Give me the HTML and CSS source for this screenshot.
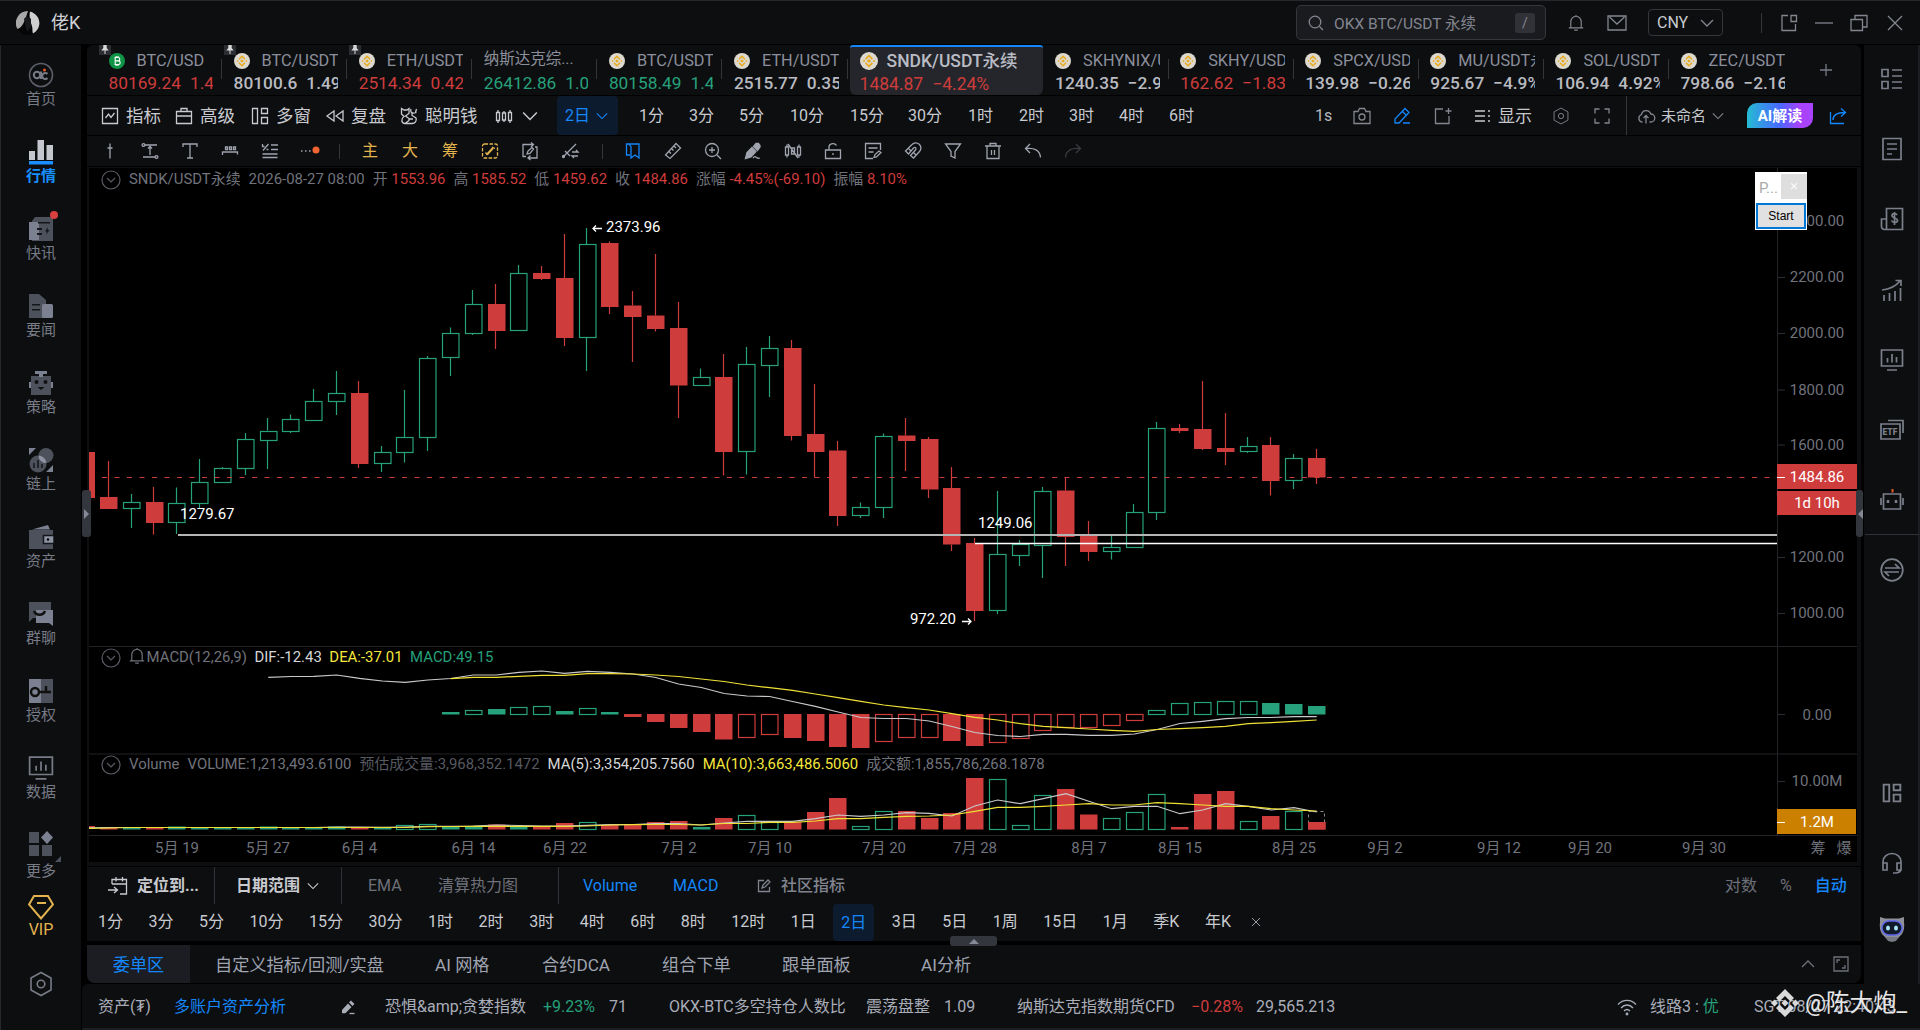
FILE: index.html
```html
<!DOCTYPE html>
<html lang="zh-CN">
<head>
    <meta charset="UTF-8">
    <meta name="viewport" content="width=device-width, initial-scale=1.0">
    <title>SNDK/USDT永续</title>
    <link rel="stylesheet" href="styles.css">
</head>
<body>
    <svg class="sprite">
        <symbol id="bnb" viewBox="0 0 16 16"><circle cx="8" cy="8" r="8" fill="#ddd9cf"/><g fill="none" stroke="#e8a91c" stroke-width="1.5"><path d="M5 6.3 8 3.3l3 3M5 9.7l3 3 3-3"/></g><path d="M8 6.2 9.8 8 8 9.8 6.2 8zM3.6 6.9 4.7 8 3.6 9.1 2.5 8zM12.4 6.9 13.5 8l-1.1 1.1L11.3 8z" fill="#e8a91c"/></symbol>
        <symbol id="btc" viewBox="0 0 16 16"><circle cx="8" cy="8" r="8" fill="#0f9447"/><path d="M5.5 4.5h3.6a1.7 1.7 0 0 1 0 3.4H6.2h3.2a1.8 1.8 0 0 1 0 3.6H5.5M6.2 4.5v7M7.2 3v1.5M9 3v1.5M7.2 11.5V13M9 11.5V13" fill="none" stroke="#fff" stroke-width="1.1"/></symbol>
        <symbol id="pin" viewBox="0 0 12 10"><path d="M0 0h12v10H0z" fill="#2b2d33"/><path d="M4.3 0h3.4v3l2 2.4H2.3L4.3 3zM5.5 5h1v4h-1z" fill="#d8d8d8"/></symbol>
        <symbol id="down" viewBox="0 0 14 14"><path d="m1 4 6 6 6-6"/></symbol>
        <symbol id="up" viewBox="0 0 14 14"><path d="M1 10 7 4l6 6"/></symbol>
        <symbol id="bell" viewBox="0 0 18 20"><path d="M1 15.500h16M3.200 15.500V9a5.800 6.500 0 0 1 11.600 0v6.500M9 1v1.500M7 18h4"/></symbol>
        <symbol id="win" viewBox="0 0 18 18"><path d="M1.500 1.500h5v15h-5zM10.500 1.500h6v5h-6zM10.500 10.500h6v6h-6z"/></symbol>
        <symbol id="hex" viewBox="0 0 24 26"><path d="m12 1.500 10 5.500v12l-10 5.500-10-5.500V7z"/><circle cx="12" cy="13" r="3.800"/></symbol>
        <symbol id="monitor" viewBox="0 0 24 24"><path d="M1.500 2h21v16h-21zM7 22h10M7.500 10v4.500M12 6v8.500M16.500 9v5.500"/></symbol>
        <symbol id="pencil" viewBox="0 0 16 16"><path d="m2 11 6-6.500 3.500 3.500-6 6.300H2zM9 3.500 11 1.500 14.500 5 12.500 7z" fill="currentColor" stroke="none"/><path d="M9.500 14.500h5"/></symbol>
    </svg>

    <header class="titlebar">
        <div class="brand">
            <svg class="avatar" viewBox="0 0 24 24"><circle cx="12" cy="12" r="12" fill="#050505"/><path d="M12 0A12 12 0 0 0 1.500 18C6 17 9 10 12 0z" fill="#a9a9aa"/><path d="M14 .5c-1 5 0 9 1.500 13s.500 6 1.500 9C26 18 26 4 14 .5z" fill="#cfcfcf"/><path d="M8 8c2-3 5-3 7 0v8l-4 5z" fill="#18191b"/></svg>
            <span>佬K</span>
        </div>
        <div class="search">
            <svg class="icon i16" viewBox="0 0 16 16"><circle cx="7" cy="7" r="5.800"/><path d="m11.500 11.500 3.500 3.500"/></svg>
            <span>OKX BTC/USDT 永续</span><kbd>/</kbd>
        </div>
        <svg class="icon i18"><use href="#bell"/></svg>
        <svg class="icon i20" viewBox="0 0 20 18"><path d="M1 2h18v14H1zM2.500 3l7.500 7 7.500-7"/></svg>
        <div class="currency">CNY <svg class="icon i14"><use href="#down"/></svg></div>
        <i class="vline"></i>
        <svg class="icon i18" viewBox="0 0 18 18"><path d="M8 1.500H2v15h13.500V10M11 1.500h5.500v6H11z"/></svg>
        <svg class="icon i18" viewBox="0 0 18 18"><path d="M0 9h18"/></svg>
        <svg class="icon i18" viewBox="0 0 18 18"><path d="M1 5.500h11.500v11H1zM5 5V1.500h12v11.500h-4"/></svg>
        <svg class="icon i16" viewBox="0 0 16 16"><path d="m1 1 14 14M15 1 1 15"/></svg>
    </header>

    <div class="body">
        <nav class="sidebar">
            <a><svg class="icon i26" viewBox="0 0 26 26"><circle cx="13" cy="13" r="11.500" stroke="#5d606a"/><circle cx="9" cy="13" r="3.200" stroke-width="2"/><path d="M13 9.500V17M19.500 16a3 3 0 1 1 0-4" stroke-width="2"/><circle cx="16.500" cy="8" r="1.500" fill="#e35a26" stroke="none"/></svg>首页</a>
            <a class="active"><svg class="i26" viewBox="0 0 26 26"><path d="M1 12h6v9H1zM9.500 1H16v20H9.500zM18.500 6H25v15h-6.500z" fill="#c4c7cd"/><path d="M1 22h24v3.500H1z" fill="#1890ff"/></svg>行情</a>
            <a class="dot"><svg class="i26" viewBox="0 0 26 26"><path d="M7 1h18v24H4V5z" fill="#4d515b"/><path d="M1 6h10v18H1z" fill="#7b8191"/><path d="M10 6h12v1.500H10zM9 12h5v2H9zM9 17h5v2H9zM20 11l-3 4.500h2L18 19l3.500-5h-2z" fill="#14161b"/></svg>快讯</a>
            <a><svg class="i26" viewBox="0 0 26 26"><path d="M1 1h10l7 6v18H1z" fill="#4d515b"/><rect x="14" y="11" width="11" height="14" rx="1.500" fill="#7b8191"/><path d="M4 11h8v1.500H4zM4 16h8v1.500H4z" fill="#14161b"/></svg>要闻</a>
            <a><svg class="i26" viewBox="0 0 26 26"><path d="M3 6h20v19H3z" fill="#4d515b"/><path d="M7 1h12v3h-4v3h-4V4H7zM1 12h2v6H1zM23 12h2v6h-2z" fill="#7b8191"/><circle cx="8.500" cy="12" r="2" fill="#111"/><circle cx="17.500" cy="12" r="2" fill="#111"/><path d="M9.500 17h7l-3.500 3z" fill="#111"/></svg>策略</a>
            <a><svg class="i26" viewBox="0 0 26 26"><circle cx="10" cy="17" r="8.500" fill="#4d515b"/><circle cx="18" cy="8.500" r="7.500" fill="#4d515b"/><path d="M10.500 8.500a8.500 8.500 0 0 1 8 7.500 7.500 7.500 0 0 1-8-7.500z" fill="#8d93a2"/><path d="M1 1h7L1 8zM25 18v7h-7z" fill="#7b8191"/><path d="M6 16v5M10 13v8M14 17v4" stroke="#14161b" stroke-width="1.500"/></svg>链上</a>
            <a><svg class="i26" viewBox="0 0 26 26"><path d="M1 6h24v19H1z" fill="#4d515b"/><path d="M4 5.500 20 1l2 4.500z" fill="#7b8191"/><path d="M15.500 11.500H26v8H15.500z" fill="#8d93a2" stroke="#14161b" stroke-width="1.500"/><circle cx="20" cy="15.500" r="1.200"/></svg>资产</a>
            <a><svg class="i26" viewBox="0 0 26 26"><path d="M1 1h22v16H5l-4 4z" fill="#4d515b"/><path d="M8 9h17v16l-4-3H8z" fill="#7b8191"/><path d="M6 10c2 5 9 5 11 0" fill="none" stroke="#111" stroke-width="2.500"/></svg>群聊</a>
            <a><svg class="i26" viewBox="0 0 26 26"><path d="M1 1h12v24H1z" fill="#7b8191"/><path d="M13 1h12v24H13z" fill="#4d515b"/><circle cx="7" cy="14" r="4" fill="none" stroke="#111" stroke-width="2.500"/><path d="M11 14h12M18 13V8" stroke="#111" stroke-width="2.500"/></svg>授权</a>
            <a><svg class="icon i26"><use href="#monitor"/></svg>数据</a>
            <a class="more"><svg class="i26" viewBox="0 0 26 26"><path d="M1 1h10v11H1zM1 14h10v11H1zM14 14h10v11H14z" fill="#4d515b"/><path d="m19 0 6 6.500-6 6.500-6-6.500z" fill="#7b8191"/></svg>更多</a>
            <a class="vip"><svg class="i26" viewBox="0 0 26 26"><path d="M6 2h14l5 8.500-12 14-12-14zM9 9h9" fill="none" stroke="#e3b44e" stroke-width="2"/></svg>VIP</a>
            <a class="settings"><svg class="icon i26"><use href="#hex"/></svg></a>
        </nav>

        <main class="main">
            <div class="tabs">
                <div class="tab"><svg class="pin"><use href="#pin"/></svg><div class="name"><svg><use href="#btc"/></svg>BTC/USD</div><div class="price red"><b>80169.24</b><b>1.49%</b></div></div>
                <div class="tab"><svg class="pin"><use href="#pin"/></svg><div class="name"><svg><use href="#bnb"/></svg>BTC/USDT</div><div class="price"><b>80100.6</b><b>1.49%</b></div></div>
                <div class="tab"><svg class="pin"><use href="#pin"/></svg><div class="name"><svg><use href="#bnb"/></svg>ETH/USDT</div><div class="price red"><b>2514.34</b><b>0.42%</b></div></div>
                <div class="tab"><div class="name cn">纳斯达克综...</div><div class="price green"><b>26412.86</b><b>1.0</b></div></div>
                <div class="tab"><div class="name"><svg><use href="#bnb"/></svg>BTC/USDT</div><div class="price green"><b>80158.49</b><b>1.49%</b></div></div>
                <div class="tab"><div class="name"><svg><use href="#bnb"/></svg>ETH/USDT</div><div class="price"><b>2515.77</b><b>0.35%</b></div></div>
                <div class="tab active"><div class="name"><svg><use href="#bnb"/></svg>SNDK/USDT永续</div><div class="price red"><b>1484.87</b><b>−4.24%</b></div></div>
                <div class="tab"><div class="name"><svg><use href="#bnb"/></svg>SKHYNIX/USDT</div><div class="price"><b>1240.35</b><b>−2.9</b></div></div>
                <div class="tab"><div class="name"><svg><use href="#bnb"/></svg>SKHY/USDT</div><div class="price red"><b>162.62</b><b>−1.83%</b></div></div>
                <div class="tab"><div class="name"><svg><use href="#bnb"/></svg>SPCX/USDT</div><div class="price"><b>139.98</b><b>−0.26</b></div></div>
                <div class="tab"><div class="name"><svg><use href="#bnb"/></svg>MU/USDT永续</div><div class="price"><b>925.67</b><b>−4.9%</b></div></div>
                <div class="tab"><div class="name"><svg><use href="#bnb"/></svg>SOL/USDT</div><div class="price"><b>106.94</b><b>4.92%</b></div></div>
                <div class="tab last"><div class="name"><svg><use href="#bnb"/></svg>ZEC/USDT</div><div class="price"><b>798.66</b><b>−2.16</b></div></div>
                <svg class="icon add" viewBox="0 0 14 14"><path d="M1 7h12M7 1v12"/></svg>
            </div>

            <div class="toolbar">
                <div class="tools">
                    <span><svg class="icon i18" viewBox="0 0 18 18"><path d="M1.500 1.500h15v15h-15zM4.500 11l3-4 2.500 3.500L13.500 6"/></svg>指标</span>
                    <span><svg class="icon i18" viewBox="0 0 18 18"><path d="M1.500 4.500h15v12h-15zM1.500 9h15M6 4V1.500h6V4"/></svg>高级</span>
                    <span><svg class="icon i18"><use href="#win"/></svg>多窗</span>
                    <span><svg class="icon i18" viewBox="0 0 18 18"><path d="m8 4-7 5 7 5zM17 4l-7 5 7 5z"/></svg>复盘</span>
                    <span><svg class="icon i18" viewBox="0 0 18 18"><path d="M1.500 1.500 4 3h3l2-1.500v5L5.500 9 9 11.500v2L5 16.500c-4 0-4-5-1-7L1.500 7zM11 2c-1 4 1 5 5.500 3.500M16.500 2l-1 3.500M12 5v3.500l4 2.500c1 3-1 5.500-4 5.500H5M9 12h4"/></svg>聪明钱</span>
                    <span class="mini"><svg class="icon i18" viewBox="0 0 18 18"><path d="M1.500 5.500h3v8h-3zM7.500 6h3v7h-3zM13.500 5.500h3v8h-3zM3 3v2.500M3 13.500V16M9 4v2M9 13v2M15 3v2.500M15 13.500V16"/></svg><svg class="icon i16"><use href="#down"/></svg></span>
                </div>
                <div class="periods">
                    <span class="active">2日<svg class="icon i12"><use href="#down"/></svg></span>
                    <span>1分</span><span>3分</span><span>5分</span><span>10分</span><span>15分</span><span>30分</span><span>1时</span><span>2时</span><span>3时</span><span>4时</span><span>6时</span>
                </div>
                <div class="actions">
                    <span>1s</span>
                    <svg class="icon i18" viewBox="0 0 18 18"><path d="M1 4.500h4l1.500-3h5l1.500 3h4v12H1z"/><circle cx="9" cy="10" r="3"/></svg>
                    <svg class="icon i18 blue" viewBox="0 0 18 18"><path d="M2 16v-4L12 1.500l4 4L6 16zM9.500 4.500l4 4M10 16h7"/></svg>
                    <svg class="icon i18" viewBox="0 0 18 18"><path d="M9 2H1.500v14.500H15V9M14.500 1v6M11.500 4h6"/></svg>
                    <span class="show"><svg class="icon i16" viewBox="0 0 16 16"><path d="M0 3h10M0 8h10M0 13h10M13 3h2M13 8h2M13 13h2"/></svg>显示</span>
                    <svg class="icon i18"><use href="#hex"/></svg>
                    <svg class="icon i18" viewBox="0 0 18 18"><path d="M2 6.500V2h4.500M11.500 2H16v4.500M16 11.500V16h-4.500M6.500 16H2v-4.500"/></svg>
                    <span class="layout"><svg class="icon i18" viewBox="0 0 18 18"><path d="M5.500 15H4.500a4 4 0 0 1 0-7.500 4.800 4.800 0 0 1 9.300-.5 4 4 0 0 1 0 8h-1.300M9 16.500V9M6.500 11 9 8.500l2.500 2.500"/></svg>未命名<svg class="icon i12"><use href="#down"/></svg></span>
                    <span class="ai">AI解读</span>
                    <svg class="icon i18 blue" viewBox="0 0 18 18"><path d="M1.500 5v11.500H15M4 13c0-5 4-7.500 12-7.500M12 1.500l4.500 4-4.500 4"/></svg>
                </div>
            </div>

            <div class="drawbar">
                <span><svg class="icon i18" viewBox="0 0 18 18"><path d="M9 1.500v15M6.500 6h5"/></svg></span>
                <span><svg class="icon i18" viewBox="0 0 18 18"><circle cx="2.500" cy="3" r="1.400"/><circle cx="15.500" cy="15" r="1.400"/><path d="M4 3h12M2 15h12M9 5v8M7 6.500 9 4.500l2 2"/></svg></span>
                <span><svg class="icon i18" viewBox="0 0 18 18"><path d="M2 5V2h14v3M9 2v14M6 16h6"/></svg></span>
                <span><svg class="icon i18" viewBox="0 0 18 18"><path d="M1.500 13v-3h15v2.500M4.500 5h2v2.500h-2zM8.500 5h2v2.500h-2zM12.500 5h2v2.500h-2z"/></svg></span>
                <span><svg class="icon i18" viewBox="0 0 18 18"><path d="M1.500 15.500h15M1.500 12h15M10 7.500h7M10 3h7M1.500 2v2.500h2M7.500 2 2 8.500M5.500 7.500h2"/></svg></span>
                <span><svg class="icon i20" viewBox="0 0 20 18"><path d="M1 9h1.500M5 9h1.500M9 9h1.500"/><circle cx="16" cy="8" r="3.500" fill="#f06432" stroke="none"/></svg></span>
                <i></i>
                <span class="gold">主</span><span class="gold">大</span><span class="gold">筹</span>
                <span class="gold"><svg class="icon i18" viewBox="0 0 18 18"><rect x="1.500" y="2" width="15" height="14" rx="2" stroke-dasharray="3.500 1.500"/><path d="m6 12.500 6-6.500" stroke-width="2"/><path d="M4.500 10.500 6.500 13M11 5l3 1.500"/></svg></span>
                <span><svg class="icon i18" viewBox="0 0 18 18"><path d="M5 14.500H2v-12h10M10 .500l2.500 2L10 5M14 5h2v11H8M9.500 13.500 7 16l2.500 2M6 12l1-3 4-3.500 1.500 1.500L9 11.500z"/></svg></span>
                <span><svg class="icon i18" viewBox="0 0 18 18"><path d="M2 15 15 2M4 9l5 5M11 10h6l-2-2M17 14h-6l2 2"/><circle cx="2.500" cy="14.500" r="1"/></svg></span>
                <i></i>
                <span class="blue"><svg class="icon i18" viewBox="0 0 18 18"><path d="M5 2h10v14l-4-3-4 3V5L5 2H2.500v11H6"/></svg></span>
                <span><svg class="icon i18" viewBox="0 0 18 18"><path d="M1.500 13 12 1.500 16.500 6 6 16.500zM5 9.500l2 2M7.500 6.500l2 2M10 4l2 2"/></svg></span>
                <span><svg class="icon i18" viewBox="0 0 18 18"><circle cx="8" cy="8" r="6.500"/><path d="m13 13 4 4M5 8h6M8 5v6"/></svg></span>
                <span><svg class="icon i18" viewBox="0 0 18 18"><path d="M1.500 16.500 3 10.500l5-5 4 4-5 5.500zM9.500 4.500 12 1.500h2.500L16 3.500V5l-2.500 3.500z" fill="currentColor"/><path d="M9 16c3-4 3 2 7 0"/></svg></span>
                <span><svg class="icon i18" viewBox="0 0 18 18"><path d="M1.500 5h3v8h-3zM7.500 6h3v6h-3zM13.500 5h3v8h-3zM3 2.500V5M3 13v2.500M15 2.500V5M15 13v2.500M4 2l10 14"/></svg></span>
                <span><svg class="icon i18" viewBox="0 0 18 18"><path d="M1.500 8h15v8.500h-15zM5 8V4.500a4 3.500 0 0 1 7.500-1M9 11v2"/></svg></span>
                <span><svg class="icon i18" viewBox="0 0 18 18"><path d="M9 16.500H1.500v-15h15V8M4.500 6h9M4.500 10h5M10 15.500l1-3L15 9l2 1.500-4.500 4.500z"/></svg></span>
                <span><svg class="icon i18" viewBox="0 0 18 18"><path d="M1.500 9 8 2.500a5 5 0 0 1 7.500 7L9.500 16 6.500 13.500l5-5.500c1.500-2-.500-3.500-2-2L4.500 12zM4.500 6.500l3 3M9.500 10.500l3 3"/></svg></span>
                <span><svg class="icon i18" viewBox="0 0 18 18"><path d="M1.500 2h15L11 9.500V16l-4-2V9.500z"/></svg></span>
                <span><svg class="icon i18" viewBox="0 0 18 18"><path d="M1 4h16M6 4V1.500h6V4M3 4v12.500h12V4M7.500 8v5M10.500 8v5"/></svg></span>
                <span><svg class="icon i18" viewBox="0 0 18 18"><path d="M6 2 1.500 6.500 6 11M2 6.500c8-1 14 1.500 14.500 9"/></svg></span>
                <span class="dim"><svg class="icon i18" viewBox="0 0 18 18"><path d="m12 2 4.500 4.500L12 11M16 6.500C8 5.500 2 8 1.500 15.500"/></svg></span>
            </div>

            <section class="chart">
                <svg id="chart" viewBox="89 168 1768 694" width="1768" height="694"></svg>
                <div class="legend ohlc">
                    <svg class="fold" viewBox="0 0 20 20"><circle cx="10" cy="10" r="9"/><path d="m6 8 4 4 4-4"/></svg>
                    <span>SNDK/USDT永续</span><span>2026-08-27 08:00</span>
                    <span>开 <b>1553.96</b></span><span>高 <b>1585.52</b></span><span>低 <b>1459.62</b></span><span>收 <b>1484.86</b></span><span>涨幅 <b>-4.45%(-69.10)</b></span><span>振幅 <b>8.10%</b></span>
                </div>
                <div class="legend macd">
                    <svg class="fold" viewBox="0 0 20 20"><circle cx="10" cy="10" r="9"/><path d="m6 8 4 4 4-4"/></svg>
                    <span><svg class="icon i18"><use href="#bell"/></svg>MACD(12,26,9)</span><span class="white">DIF:-12.43</span><span class="yellow">DEA:-37.01</span><span class="green">MACD:49.15</span>
                </div>
                <div class="legend volume">
                    <svg class="fold" viewBox="0 0 20 20"><circle cx="10" cy="10" r="9"/><path d="m6 8 4 4 4-4"/></svg>
                    <span>Volume</span><span>VOLUME:1,213,493.6100</span><span class="dim">预估成交量:3,968,352.1472</span><span class="white">MA(5):3,354,205.7560</span><span class="yellow">MA(10):3,663,486.5060</span><span>成交额:1,855,786,268.1878</span>
                </div>
                <div class="popup">
                    <div class="popup-head"><span>P...</span><em>×</em></div>
                    <button>Start</button>
                </div>
                <div class="handle left"></div>
                <div class="handle right"></div>
            </section>

            <div class="panel">
                <div class="indicators">
                    <span class="locate bold"><svg class="icon i20" viewBox="0 0 20 20"><path d="M4 8V3.500h14.500V18H12M8 1v4.500M14.500 1v4.500M4 8h14M0 14h9M6 11l3.500 3L6 17"/></svg>定位到...</span>
                    <span class="range bold">日期范围<svg class="icon i12"><use href="#down"/></svg></span>
                    <span class="ema">EMA</span><span class="heat">清算热力图</span>
                    <span class="vol blue">Volume</span><span class="mac blue">MACD</span>
                    <span class="custom"><svg class="icon i14" viewBox="0 0 14 14"><path d="M7 1.500H1.500v11h11V8M5 9l1-3 5-5 2 2-5 5z"/></svg>社区指标</span>
                    <span class="scale"><span>对数</span><span>%</span><span class="blue">自动</span></span>
                </div>
                <div class="intervals">
                    <span>1分</span><span>3分</span><span>5分</span><span>10分</span><span>15分</span><span>30分</span><span>1时</span><span>2时</span><span>3时</span><span>4时</span><span>6时</span><span>8时</span><span>12时</span><span>1日</span><span class="active">2日</span><span>3日</span><span>5日</span><span>1周</span><span>15日</span><span>1月</span><span>季K</span><span>年K</span>
                    <svg class="icon i10" viewBox="0 0 10 10"><path d="m1 1 8 8M9 1 1 9"/></svg>
                </div>
                <div class="grip"></div>
            </div>

            <div class="orders">
                <span class="active">委单区</span><span>自定义指标/回测/实盘</span><span>AI 网格</span><span>合约DCA</span><span>组合下单</span><span>跟单面板</span><span>AI分析</span>
                <div class="orders-right">
                    <svg class="icon i14"><use href="#up"/></svg>
                    <svg class="icon i16" viewBox="0 0 16 16"><path d="M1 1h14v14H1zM4 7V4h3M12 9v3H9"/></svg>
                </div>
            </div>
        </main>

        <aside class="rail">
            <svg class="icon i24" viewBox="0 0 24 24"><path d="M2 2.500h6v7H2zM2 14.500h6v7H2zM12 3h10M12 9h10M12 15h10M12 21h10"/></svg>
            <svg class="icon i24" viewBox="0 0 24 24"><path d="M3 1.500h18v21H3zM7 7h10M7 12h10M7 17h5"/></svg>
            <svg class="icon i24" viewBox="0 0 24 24"><path d="M6.500 22V1.500H22.500v21H4.500a3 3 0 0 1-3-3V12h5M17 8c-1-2-5-2-5 .500 0 3 5.500 2 5.500 5 0 2.500-5 2.500-6 0M14.500 5v13"/></svg>
            <svg class="icon i24" viewBox="0 0 24 24"><path d="M4 17v6M9.500 15v8M15 13v10M20.500 10v13M2 12c9-1 14-4 18-9M15.500 2.500H21V8"/></svg>
            <svg class="icon i24"><use href="#monitor"/></svg>
            <svg class="icon i24" viewBox="0 0 24 24"><path d="M1 6h19v15H1zM8 2.500h15V15"/><text x="2.500" y="17">ETF</text></svg>
            <svg class="icon i24" viewBox="0 0 24 24"><path d="M3.500 6h17v15h-17zM1 10v7M23 10v7"/><path d="M8 12v3M16 12v3" stroke-width="2.500"/><path d="M12.500 1v3.500" stroke="#e35a26" stroke-width="2"/></svg>
            <hr>
            <svg class="icon i24" viewBox="0 0 24 24"><circle cx="12" cy="12" r="10.800"/><path d="M5 10h14l-4-4M19 14H5l4 4"/></svg>
            <svg class="icon i20 win"><use href="#win"/></svg>
            <svg class="icon i22 headset" viewBox="0 0 22 22"><path d="M2 12V9.500a9 8 0 0 1 18 0V16c0 3-2 5-6 5h-2M2 11h4v7H2zM16 11h4v7h-4z"/></svg>
            <svg class="i26 robot" viewBox="0 0 26 26"><path d="m1 1 5 1.500h14L25 1v5q1 7-2 12l-4 4H7l-4-4Q0 13 1 6z" fill="#8d9099"/><rect x="3" y="5" width="20" height="14" rx="7" fill="#111a2c" stroke="#5f67e8" stroke-width="1.500"/><ellipse cx="9" cy="12" rx="2" ry="2.500" fill="#a8e5f5"/><ellipse cx="17" cy="12" rx="2" ry="2.500" fill="#a8e5f5"/><path d="M6 21h14l-3 4-4 1-4-1z" fill="#777a82"/></svg>
        </aside>
    </div>

    <footer class="status">
        <span>资产(₮)</span><span class="blue">多账户资产分析</span><svg class="icon i16"><use href="#pencil"/></svg>
        <span>恐惧&amp;amp;贪婪指数</span><span class="green">+9.23%</span><span>71</span>
        <span>OKX-BTC多空持仓人数比</span><span>震荡盘整</span><span>1.09</span>
        <span>纳斯达克指数期货CFD</span><span class="red">−0.28%</span><span>29,565.213</span>
        <svg class="icon i20" viewBox="0 0 20 18"><path d="M1 6.500c5-5.500 13-5.500 18 0M4 10c3.500-4 8.500-4 12 0M7 13c2-2 4-2 6 0" /><circle cx="10" cy="16" r=".8"/></svg>
        <span>线路3 : <b class="green">优</b></span><span>SGT 08/27 22:40:43</span>
    </footer>
    <div class="watermark">
        <svg viewBox="0 0 28 28"><path d="m14 0 9 9-3.500 3.500L14 7l-5.500 5.500L5 9zM14 28l-9-9 3.500-3.500L14 21l5.500-5.500L23 19zM14 10.500l3.500 3.500-3.500 3.500-3.500-3.500zM3.500 10.500 7 14l-3.500 3.500L0 14zM24.500 10.500 28 14l-3.500 3.500L21 14z"/></svg>@陈大炮_
    </div>

    <script src="script.js"></script>
</body>
</html>
```
FILE: styles.css
```css
* {
    box-sizing: border-box;
}

body {
    margin: 0;
    width: 1920px;
    height: 1030px;
    overflow: hidden;
    background: #000;
    color: #c8cacf;
    font: 16px/20px Roboto, "Noto Sans CJK SC", sans-serif;
    border-top: 1px solid #26282e;
}

span, div, a {
    white-space: nowrap;
}

.sprite {
    position: absolute;
    width: 0;
    height: 0;
}

.icon {
    fill: none;
    stroke: currentColor;
    stroke-width: 1.3;
    flex: none;
    overflow: visible;
}

.i10 { width: 10px; height: 10px; }
.i12 { width: 12px; height: 12px; }
.i14 { width: 14px; height: 14px; }
.i16 { width: 16px; height: 16px; }
.i18 { width: 18px; height: 18px; }
.i20 { width: 20px; height: 20px; }
.i22 { width: 22px; height: 22px; }
.i24 { width: 24px; height: 24px; }
.i26 { width: 26px; height: 26px; }

.red { color: #cf3c3c; }
.green { color: #26a17b; }
.blue { color: #1487fa; }
.yellow { color: #f5e73c; }
.white { color: #d6d6d8; }
.bold { font-weight: 700; }

/* title bar */
.titlebar {
    height: 44px;
    display: grid;
    grid-template-columns: 1280px 271px 40px 41px 113px 19px 35px 35px 37px 18px;
    align-items: center;
    padding-left: 16px;
    background: #0d0e10;
    color: #83868f;
    border-bottom: 1px solid #000;
}

.brand {
    display: flex;
    align-items: center;
    gap: 11px;
    font-size: 18px;
    color: #d0d2d6;
}

.avatar {
    width: 24px;
    height: 24px;
}

.search {
    display: flex;
    align-items: center;
    width: 250px;
    height: 35px;
    padding: 0 10px 0 11px;
    border: 1px solid #34363c;
    border-radius: 5px;
    background: #1a1b1f;
    font-size: 15.500px;
}

.search span {
    margin-left: 10px;
    margin-top: 3px;
    flex: 1;
}

.search kbd {
    width: 20px;
    height: 20px;
    border-radius: 3px;
    background: #313238;
    font: 14px/20px Roboto;
    text-align: center;
}

.currency {
    display: flex;
    align-items: center;
    justify-content: space-between;
    width: 75px;
    height: 27px;
    padding: 0 8px;
    border: 1px solid #34363c;
    border-radius: 4px;
    color: #c8cace;
}

.currency .icon {
    color: #83868f;
}

.titlebar .vline {
    width: 1px;
    height: 20px;
    background: #34363c;
}

/* page body */
.body {
    display: flex;
    height: 939px;
}

.sidebar {
    width: 81px;
    height: 985px;
    margin-right: 6px;
    padding-top: 17px;
    background: #0d0e10;
    border-left: 1px solid #26282e;
    flex: none;
}

.sidebar a {
    display: flex;
    flex-direction: column;
    align-items: center;
    height: 77px;
    gap: 1px;
    font-size: 15px;
    color: #777b86;
    position: relative;
}

.sidebar .active {
    color: #1890ff;
    font-weight: 700;
}

.sidebar .dot::after {
    content: "";
    position: absolute;
    left: 49px;
    top: -5px;
    width: 8px;
    height: 8px;
    border-radius: 50%;
    background: #d93f3f;
}

.sidebar .more {
    height: 63px;
    margin-top: -1px;
    gap: 4px;
}

.sidebar .more::after {
    content: "";
    position: absolute;
    left: 54px;
    top: 25px;
    border: 3px solid #4d515b;
    border-top-color: transparent;
    border-left-color: transparent;
}

.sidebar .vip {
    height: 77px;
    color: #e3b44e;
    font-size: 16px;
    gap: 0;
}

.sidebar .settings .icon,
.sidebar a > .icon {
    stroke-width: 1.6;
}

.main {
    width: 1774px;
    flex: none;
}

.tabs {
    display: flex;
    height: 51px;
    padding-left: 10px;
    border-bottom: 1px solid #000;
    background: #0d0e10;
    border-radius: 6px 6px 0 0;
}

.tab {
    position: relative;
    width: 125.100px;
    height: 50px;
    padding: 5px 9px 0 11.500px;
    flex: none;
}

.tab::after {
    content: "";
    position: absolute;
    right: 0;
    top: 14px;
    width: 1px;
    height: 20px;
    background: #33353b;
}

.tab.last::after {
    display: none;
}

.tab .pin {
    position: absolute;
    left: 2px;
    top: 0;
    width: 12px;
    height: 10px;
}

.tab .name,
.tab .price {
    overflow: hidden;
    height: 22px;
    line-height: 22px;
}

.tab .name {
    display: flex;
    align-items: center;
    font-size: 16.300px;
    color: #8b8f9b;
}

.tab .name svg {
    width: 16px;
    height: 16px;
    margin-right: 12px;
    flex: none;
}

.tab .cn {
    padding-bottom: 4px;
    font-size: 15.500px;
}

.tab .price {
    display: flex;
    gap: 9px;
    height: 23px;
    line-height: 22px;
    font-size: 17.300px;
    color: #b9bbc0;
}

.tab .price.red { color: #cf3c3c; }
.tab .price.green { color: #26a17b; }

.tab b {
    font-weight: 500;
}

.tab .price.red b,
.tab .price.green b {
    font-weight: 400;
}

.tab.active {
    width: 193px;
    margin: 0 1px 0 2px;
    padding: 3px 0 0 10px;
    background: #25262b;
    border-top: 2px solid #1487fa;
    border-radius: 3px 3px 6px 6px;
}

.tab.active::after {
    display: none;
}

.tab.active .name {
    font-size: 17.500px;
    font-weight: 500;
    color: #b9bcc4;
}

.tab.active .name svg {
    width: 18px;
    height: 18px;
    margin-right: 9px;
}

.tab.active .price {
    line-height: 24px;
    font-size: 17.500px;
}

.tabs .add {
    width: 14px;
    height: 14px;
    margin: 18px 0 0 25px;
    color: #777b86;
}

.toolbar {
    display: flex;
    height: 40px;
    background: #0d0e10;
    border-bottom: 1px solid #000;
}

.tools {
    display: grid;
    grid-template-columns: 74px 76px 75px 74px 95px 60px;
    align-items: center;
    padding-left: 14px;
    width: 470px;
    font-size: 17.500px;
}

.tools span {
    display: flex;
    align-items: center;
    gap: 7px;
}

.tools .mini {
    gap: 9px;
}

.periods {
    display: grid;
    grid-template-columns: 82px 50px 50px 51px 60px 58px 60px 51px 50px 50px 50px 50px;
    align-items: center;
    width: 758px;
}

.periods .active {
    display: flex;
    align-items: center;
    gap: 6px;
    width: 61px;
    height: 39px;
    padding-left: 8px;
    border-radius: 4px;
    background: #0c1b2d;
    color: #1487fa;
}

.actions {
    display: grid;
    grid-template-columns: 38px 40px 41px 41px 77px 41px 33px 121px 82px 20px;
    align-items: center;
    color: #83868f;
}

.actions .blue {
    color: #1487fa;
}

.actions span:first-child {
    color: #b5b8bf;
}

.show,
.layout {
    display: flex;
    align-items: center;
    color: #c5c7cb;
}

.show {
    gap: 7px;
    font-size: 17px;
}

.layout {
    gap: 6px;
    height: 39px;
    padding-left: 10px;
    border-left: 1px solid #34363c;
    font-size: 15px;
}

.layout .icon {
    color: #83868f;
}

.ai {
    width: 66px;
    height: 25px;
    border-radius: 10px 0 10px 0;
    background: linear-gradient(90deg, #25bbd3, #4a68ff 50%, #a842fb 80%);
    color: #fff;
    font-weight: 700;
    font-size: 15px;
    line-height: 26px;
    text-align: center;
}

.drawbar {
    display: flex;
    align-items: center;
    height: 31px;
    padding-left: 3px;
    background: #0d0e10;
    border-bottom: 1px solid #000;
    color: #a0a4ae;
}

.drawbar span {
    display: flex;
    justify-content: center;
    width: 40px;
}

.drawbar i {
    width: 1px;
    height: 15px;
    margin: 0 10px 0 9px;
    background: #34363c;
}

.drawbar span + i ~ span + i {
    margin: 0 10px 0 12px;
}

.drawbar .gold {
    color: #e3b44e;
}

.drawbar .dim {
    color: #383a3f;
}

.drawbar .blue {
    color: #1487fa;
}

/* chart */
.chart {
    position: relative;
    height: 699px;
    padding: 1px 0 0 2px;
    background: #0d0e10;
}

.chart > svg {
    display: block;
    background: #000;
}

#chart text {
    font-size: 15px;
    fill: #70737c;
}

#chart .label {
    fill: #fff;
}

.legend {
    position: absolute;
    left: 14px;
    display: flex;
    align-items: center;
    gap: 8px;
    height: 20px;
    font-size: 14.920px;
    color: #70737c;
}

.legend b {
    font-weight: 400;
    color: #cf3c3c;
}

.legend .dim {
    color: #565960;
}

.legend .icon {
    margin: 0 1px 0 -1px;
    vertical-align: -3px;
}

.ohlc { top: 2px; }
.macd { top: 480px; gap: 7.600px; }
.volume { top: 587px; }

.fold {
    width: 20px;
    height: 20px;
    margin-top: 2px;
    fill: none;
    stroke: #585b62;
    stroke-width: 1.2;
}

.popup {
    position: absolute;
    left: 1668px;
    top: 5px;
    width: 52px;
    height: 58px;
    background: #fff;
    color: #aaa;
}

.popup-head {
    display: flex;
    justify-content: space-between;
    height: 31px;
    padding: 2px 0 0 4px;
    line-height: 28px;
    font-size: 15px;
}

.popup em {
    width: 26px;
    height: 25px;
    background: #dedede;
    color: #f6f6f6;
    font-style: normal;
    line-height: 24px;
    text-align: center;
}

.popup button {
    display: block;
    width: 50px;
    height: 26px;
    margin: 0 1px;
    padding: 0;
    border: 2px solid #0078d7;
    background: #e1e1e1;
    font: 12px "Liberation Sans", sans-serif;
    color: #000;
}

.handle {
    position: absolute;
    top: 323px;
    width: 9px;
    height: 47px;
    border-radius: 3px;
    background: #34363d;
}

.handle.left { left: -5px; }
.handle.right { left: 1769px; width: 7px; }

.handle::after {
    content: "";
    position: absolute;
    top: 19px;
    left: 2px;
    border: 5px solid transparent;
    border-left-color: #858995;
    border-right-width: 0;
}

.handle.right::after {
    border-left-width: 0;
    border-right: 5px solid #858995;
}

/* indicator and interval rows */
.panel {
    position: relative;
    height: 75px;
    background: #0d0e10;
    border-top: 1px solid #000;
}

.indicators {
    display: grid;
    grid-template-columns: 128px 127px 96px 121px 90px 84px 972px 136px;
    align-items: center;
    height: 37px;
    color: #6d7079;
}

.indicators > span {
    display: flex;
    align-items: center;
    height: 37px;
}

.indicators .bold {
    color: #c8cacf;
}

.indicators .locate {
    padding-left: 21px;
    gap: 9px;
    border-right: 1px solid #303239;
}

.indicators .range {
    padding-left: 21px;
    gap: 7px;
    border-right: 1px solid #303239;
}

.indicators .ema { padding-left: 26px; }
.indicators .heat { border-right: 1px solid #303239; }
.indicators .vol { padding-left: 24px; }
.indicators .mac { padding-left: 24px; }

.indicators .blue {
    color: #1487fa;
}

.indicators .custom {
    gap: 10px;
    padding-left: 24px;
    color: #80848f;
    font-weight: 500;
}

.indicators .scale {
    gap: 23px;
    padding-left: 20px;
}

.indicators .scale .blue {
    font-weight: 500;
}

.intervals {
    display: flex;
    align-items: center;
    gap: 25.530px;
    height: 36px;
    padding-left: 11px;
}

.intervals .active {
    width: 41px;
    height: 37px;
    margin: 0 -8px;
    border-radius: 4px;
    background: #0c1b2d;
    color: #1487fa;
    line-height: 37px;
    text-align: center;
}

.intervals .icon {
    margin-left: -5px;
    color: #9a9da6;
    stroke-width: 1;
}

.grip {
    position: absolute;
    left: 863px;
    top: 69px;
    width: 47px;
    height: 10px;
    border-radius: 3px;
    background: #34363d;
}

.grip::after {
    content: "";
    position: absolute;
    left: 19px;
    top: 3px;
    border: 5px solid transparent;
    border-top-width: 0;
    border-bottom-color: #858995;
}

.orders {
    display: grid;
    grid-template-columns: 128px 220px 107px 120px 120px 139px 875px 65px;
    align-items: center;
    height: 38px;
    margin-top: 4px;
    background: #0d0e10;
    border-radius: 0 0 8px 8px;
    font-size: 17.200px;
    color: #9fa4b0;
}

.orders span {
    padding-top: 2px;
}

.orders .active {
    width: 103px;
    height: 38px;
    background: #1b1d22;
    color: #1487fa;
    line-height: 36px;
    text-align: center;
    border-radius: 0 0 0 8px;
}

.orders-right {
    display: flex;
    align-items: center;
    gap: 18px;
    padding-left: 5px;
    color: #6d7079;
}

/* right rail */
.rail {
    display: flex;
    flex-direction: column;
    align-items: center;
    width: 56px;
    margin-left: 3px;
    padding: 22px 0 0 1px;
    gap: 46.200px;
    background: #0d0e10;
    border-right: 2px solid #1c1d22;
    color: #7b7f8a;
}

.rail .icon {
    stroke-width: 1.7;
}

.rail hr {
    width: 54px;
    margin: -24px 0 -24px;
    border: 0;
    border-top: 1px solid #303239;
    flex: none;
}

.rail text {
    fill: currentColor;
    stroke: none;
    font: 900 8.500px Roboto;
}

.rail .win {
    margin-top: 155px;
}

.rail .headset {
    margin-top: 3px;
}

.rail .robot {
    margin-top: -4px;
}

/* status bar */
.status {
    position: relative;
    display: grid;
    grid-template-columns: 76px 166px 45px 158px 66px 60px 197px 78px 73px 174px 65px 361px 33px 104px 160px;
    align-items: center;
    height: 46px;
    margin-left: 82px;
    padding: 2px 0 0 16px;
    background: #0d0e10;
    border-bottom: 2px solid #1c1d22;
    border-radius: 6px 0 0 0;
    color: #a9adb8;
}

.status b {
    font-weight: 400;
}

.status .blue { color: #1487fa; }
.status .green { color: #26a17b; }
.status .red { color: #cf3c3c; }

.watermark {
    position: absolute;
    left: 1771px;
    top: 988px;
    display: flex;
    align-items: center;
    gap: 6px;
    font-size: 23.500px;
    line-height: 30px;
    color: #e6e6e6;
}

.watermark svg {
    width: 28px;
    height: 28px;
    fill: #d9d9d9;
}
```
FILE: script.js
```js
const NS = 'http://www.w3.org/2000/svg';
const chart = document.getElementById('chart');
const RED = '#cf3c3c';
const GREEN = '#26a17b';
const STEP = 22.79;

// direction, high, body top, body bottom, low
const candles = [
    ['r',461,497,509,509], ['g',494,502,509,528], ['r',487,502,523,534.5], ['g',487.5,503,523,534],
    ['g',459,482,504,508], ['g',467,468,483,483], ['g',433,439,469,475], ['g',418,430.5,440.5,469],
    ['g',414.5,419,432,433], ['g',389,401,420.5,420.5], ['g',371,393,402,415], ['r',381,393,464,468],
    ['g',446,452,464,472], ['g',390,437,453,462.5], ['g',356,358,438,451], ['g',327.5,333,358,376],
    ['g',290,304,334,335], ['r',284,304,331,349], ['g',265,273,331,331], ['r',266,273,279,280],
    ['r',234,278,338,346], ['g',228,244,337.5,371], ['r',241.5,243,307,314], ['r',291,305.5,317,362],
    ['r',254,315.5,329,331.5], ['r',302,328,385.5,418], ['g',368.5,377,386,386], ['r',354,377,452,475.5],
    ['g',347,364,452,474.5], ['g',336,348,365.5,397], ['r',340,348,436,440.5], ['r',384,434,452,477.5],
    ['r',441,450.5,516,526], ['g',502.5,507,516,518], ['g',433.5,436,508,518], ['r',418,435.5,441,471],
    ['r',437,439,489.5,498], ['r',467,488,544.5,551], ['r',538,543,611,621], ['g',491,554,610.5,614],
    ['g',540,544,555.5,566], ['g',487,491,545.5,578], ['r',477,490.5,537,566], ['r',521,535,552,561],
    ['g',535,547,552,559.5], ['g',504,512,548,548], ['g',422,428,513,520], ['r',424,428,431,433],
    ['r',381,429,449,450], ['r',413,448,452,465], ['g',437,446,452,453], ['r',437,445,481,495.5],
    ['g',454,458,481,489], ['r',449,458,477.5,484]
];

// MACD bars from index 15, [edge, filled]
const macd = [
    [712,1],[709.5,0],[709,1],[707,0],[706,0],[711,1],[708,0],[712,1],[717,1],[722,1],[728,1],[732,1],[739.5,1],
    [738,0],[734.5,0],[738,1],[741,1],[747,1],[748,1],[741.5,0],[737.5,0],[737.5,0],[741,1],[746,1],[742.5,0],
    [739,0],[731,0],[728,0],[727.5,0],[725.5,0],[720.5,0],[709.5,0],[703,0],[702,0],[701,0],[701,0],[703,1],[704,1],[706,1]
];
const dif = [677.3,676.5,676.3,675,678.3,681,682.3,680,678.5,675,675,672.3,671,673.3,671.3,672.3,674,677.5,684,687.5,693.5,696,696.5,701.5,706.3,712,717.5,718.5,718.5,721,726.5,732.5,735.5,736.5,734.3,734.3,735.3,735.3,734,729.5,723.5,721.3,718.7,717.5,717.5,716.6,716.6];
const dea = [678.7,677.3,677.3,676.3,675.3,675.3,673.7,673.7,674,675,676.5,679,681.5,685,687.7,690.3,694,697.7,701.3,705,707.7,710,713.7,717.3,720,723.7,726.3,727.7,729,730.3,731.3,729.5,728.7,727.7,726.3,723.7,722.7,721.3,720];

const volume = [828,828,828,826.5,827.5,828,827.5,826.5,827.5,828,826.5,827,827.5,824.5,823.5,827,827,824.5,827,827,823,822,825,825,822,821,827,818,814.5,822,822,812,798,826,811,811,818,813,778,779,824.5,794.5,789,814.5,818,811.5,794,827,794,791,821,816,811,822];
const ma5 = [827.5,827.5,827.5,827.5,827.5,827.5,827.5,827.5,827.5,827.5,827,827,827.3,827,826.3,826.3,826,825,825.5,826,826,825.3,824.7,824.5,823.5,823.5,825,823,821.3,821.3,821.3,818.7,815,816.3,815,812.7,813.3,816,806,800,803.7,798.7,793.7,801.3,808.7,806.3,806.3,813.7,810,803.7,806.3,810,807.7,812];
const ma10 = [828,827.5,827.5,827.5,827.5,827.5,827.5,827.5,827.5,827.5,827.5,827.5,827.5,827.5,826.7,826.5,826.3,826.3,826.3,826.3,826.3,826,825,824.7,824.5,824.5,825,823.5,823.5,822.3,822.3,821,818.7,818.7,817.3,816.3,816,815,811.3,807.3,807.3,806.3,805,803.7,805,805,802.7,803.7,805,806.3,806.3,808.7,810,811];

function add(tag, attrs, text) {
    const el = document.createElementNS(NS, tag);
    for (const key in attrs) el.setAttribute(key, attrs[key]);
    if (text) el.textContent = text;
    chart.appendChild(el);
}

function x(i) {
    return 108.8 + i * STEP;
}

function line(x1, y1, x2, y2, color, width = 1, dash = 'none') {
    add('line', { x1, y1, x2, y2, stroke: color, 'stroke-width': width, 'stroke-dasharray': dash });
}

function bar(cx, top, bottom, color, filled) {
    const left = Math.round(cx - 8.7);
    if (filled || bottom - top < 2.5) {
        add('rect', { x: left, y: top, width: 17.5, height: bottom - top, fill: color });
    } else {
        top = Math.round(top);
        bottom = Math.round(bottom);
        add('rect', { x: left + 0.5, y: top + 0.5, width: 16.5, height: Math.max(bottom - top - 1, 1), fill: 'none', stroke: color, 'stroke-width': 1.2 });
    }
}

function curve(values, start, color) {
    const points = values.map((v, i) => x(i + start).toFixed(1) + ',' + v).join(' ');
    add('polyline', { points, fill: 'none', stroke: color, 'stroke-width': 1.2 });
}

function label(px, y, text, anchor = 'middle', cls = '') {
    add('text', { x: px, y, 'text-anchor': anchor, class: cls }, text);
}

// pane borders and axis
[646.5, 754, 835.5].forEach(y => line(89, y, 1857, y, '#222326'));
line(1777.5, 168, 1777.5, 835, '#222326');
[[2400, 220.5], [2200, 277], [2000, 333], [1800, 389.5], [1600, 444.5], [1200, 557], [1000, 613]].forEach(([p, y]) => {
    line(1778, y + 0.5, 1785, y + 0.5, '#2b2d31');
    label(1817, y + 5, p + '.00');
});
line(1778, 714.5, 1785, 714.5, '#2b2d31');
label(1817, 719.5, '0.00');
line(1778, 781.5, 1785, 781.5, '#2b2d31');
label(1817, 786, '10.00M');

// candles
add('rect', { x: 89, y: 452, width: 6, height: 46, fill: RED });
candles.forEach(([dir, high, top, bottom, low], i) => {
    const color = dir === 'r' ? RED : GREEN;
    const cx = Math.round(x(i)) - 0.5;
    line(cx, high, cx, top, color, 1.2);
    line(cx, bottom, cx, low, color, 1.2);
    bar(x(i), top, bottom, color, dir === 'r');
});
line(102, 477.5, 1777, 477.5, RED, 1, '5 7.5');
line(178, 535, 1777, 535, '#b5b5b5', 2);
line(975, 543.5, 1777, 543.5, '#fff', 1.3);
label(180, 519, '1279.67', 'start', 'label');
label(978, 527.5, '1249.06', 'start', 'label');
label(606, 231.5, '2373.96', 'start', 'label');
label(956, 624, '972.20', 'end', 'label');
add('path', { d: 'M602 228.500h-9M596 225.500l-3 3 3 3M962 621.500h9M968 618.500l3 3-3 3', fill: 'none', stroke: '#fff', 'stroke-width': 1.3 });

// macd
macd.forEach(([edge, filled], i) => {
    if (edge < 714) bar(x(i + 15), edge, 714.5, GREEN, filled);
    else bar(x(i + 15), 714, edge, RED, filled);
});
curve(dif, 7, '#c9c9cc');
curve(dea, 15, '#efe036');

// volume
volume.forEach((top, i) => {
    const red = candles[i][0] === 'r';
    bar(x(i), top, 829.5, red ? RED : GREEN, red || top > 826);
});
add('rect', { x: 89, y: 826, width: 6, height: 3, fill: RED });
add('rect', { x: 1308.5, y: 811.5, width: 16, height: 17, fill: 'none', stroke: '#8b8b8b', 'stroke-dasharray': '3 3' });
bar(x(53), 822, 829.5, RED, true);
curve([828, ...ma5], -1, '#c9c9cc');
curve([828.5, ...ma10], -1, '#efe036');

// price tags
add('rect', { x: 1777, y: 464, width: 80, height: 25, fill: RED });
add('rect', { x: 1777, y: 491, width: 80, height: 24, fill: RED });
add('rect', { x: 1777, y: 809, width: 79, height: 25, fill: '#cc8000' });
line(1777, 477.5, 1785, 477.5, '#fff');
line(1777, 822.5, 1785, 822.5, '#fff');
label(1817, 482, '1484.86', 'middle', 'label');
label(1817, 508, '1d 10h', 'middle', 'label');
label(1817, 827, '1.2M', 'middle', 'label');

[['5月 19', 177], ['5月 27', 268], ['6月 4', 359.5], ['6月 14', 473.5], ['6月 22', 565], ['7月 2', 679], ['7月 10', 770],
 ['7月 20', 884], ['7月 28', 975], ['8月 7', 1089], ['8月 15', 1180], ['8月 25', 1294], ['9月 2', 1385], ['9月 12', 1499],
 ['9月 20', 1590], ['9月 30', 1704], ['筹', 1818], ['爆', 1844]].forEach(([t, px]) => label(px, 853, t));
```
